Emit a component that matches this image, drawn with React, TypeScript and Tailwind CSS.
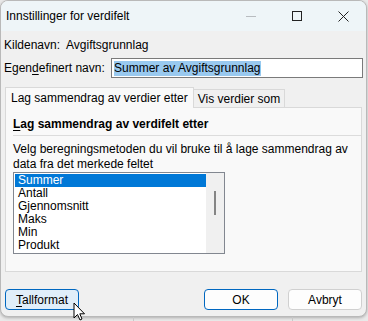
import React from "react";

const items = ["Summer", "Antall", "Gjennomsnitt", "Maks", "Min", "Produkt"];

const font = { fontFamily: '"Liberation Sans", Arial, sans-serif' };

function U({ children }: { children: React.ReactNode }) {
  return <span className="underline underline-offset-2">{children}</span>;
}

const App = () => {
  return (
    <div className="relative w-[368px] h-[321px] overflow-hidden bg-[#e9e9e9] text-[12px] leading-[16px] text-black" style={font}>
      {/* strip under window */}
      <div className="absolute left-[133px] top-[317px] h-[4px] w-px bg-[#c8c8c8]" />
      <div className="absolute left-[292px] top-[317px] h-[4px] w-px bg-[#c8c8c8]" />

      <div className="flex flex-col w-[367px] h-[317px] rounded-lg border border-[#b9b9b9] bg-[#f0f0f0] overflow-hidden shadow-[0_1px_3px_rgba(0,0,0,0.25)]">
        {/* title bar */}
        <div className="shrink-0 flex items-center h-[30px] bg-[#eef5f8] pl-[5px]">
          <span className="flex-1 whitespace-nowrap">Innstillinger for verdifelt</span>
          <div className="w-[46px] h-full flex items-center justify-center">
            <div className="w-[10px] h-px bg-[#b8bcc0]" />
          </div>
          <div className="w-[46px] h-full flex items-center justify-center">
            <div className="w-[10px] h-[10px] border border-[#222]" />
          </div>
          <div className="w-[46px] h-full flex items-center justify-center">
            <svg width="11" height="11" viewBox="0 0 11 11">
              <path d="M0.5 0.5 L10.5 10.5 M10.5 0.5 L0.5 10.5" stroke="#222" strokeWidth="1" />
            </svg>
          </div>
        </div>

        {/* body */}
        <div className="flex flex-col px-[3px] pt-[6px] flex-1">
          <div className="flex items-center h-[16px] whitespace-nowrap">
            <span className="w-[62px]">Kildenavn:</span>
            <span>Avgiftsgrunnlag</span>
          </div>

          <div className="flex items-center mt-[5px]">
            <span className="w-[107px] whitespace-nowrap">
              Egen<U>d</U>efinert navn:
            </span>
            <div className="flex items-center w-[252px] h-[20px] border border-[#7a7a7a] bg-white px-[2px]">
              <span className="bg-[#99c9ef] leading-[15px] whitespace-nowrap">Summer av Avgiftsgrunnlag</span>
            </div>
          </div>

          {/* tabs */}
          <div className="flex mt-[9px] ml-[1px] items-end whitespace-nowrap">
            <div className="relative z-10 h-[21px] px-[5px] flex items-center bg-[#f9f9f9] border border-[#d9d9d9] border-b-0">
              Lag sammendrag av verdier etter
            </div>
            <div className="h-[19px] px-[4px] flex items-center bg-[#f0f0f0] border border-[#d9d9d9] border-l-0 border-b-0">
              Vis verdier som
            </div>
          </div>
          <div className="-mt-px ml-[1px] w-[357px] h-[165px] border border-[#d9d9d9] bg-[#f9f9f9] pl-[7px] pt-[8px]">
            <div className="font-bold whitespace-nowrap">
              <U>L</U>ag sammendrag av verdifelt etter
            </div>
            <div className="h-px bg-[#dcdcdc] mt-[3px]" />
            <div className="mt-[6px] leading-[15px] pr-[10px]">
              Velg beregningsmetoden du vil bruke til å lage sammendrag av data fra det merkede feltet
            </div>
            <div className="flex w-[212px] h-[82px] border border-[#828790] bg-white">
              <div className="flex-1 pl-px pt-px">
                {items.map((it, i) => (
                  <div
                    key={it}
                    className={
                      "h-[13px] leading-[13px] pl-[3px] " + (i === 0 ? "bg-[#0078d7] text-white" : "")
                    }
                  >
                    {it}
                  </div>
                ))}
              </div>
              <div className="w-[18px] bg-[#f0f0f0] flex justify-center pt-[18px]">
                <div className="w-[2px] h-[24px] bg-[#858585]" />
              </div>
            </div>
          </div>

          {/* buttons */}
          <div className="flex items-center mt-[17px] ml-px">
            <button className="w-[74px] h-[21px] rounded-[4px] border border-[#0067c0] bg-[#e0eef9] leading-[16px]">
              <U>T</U>allformat
            </button>
            <div className="flex-1" />
            <button className="w-[74px] h-[21px] rounded-[4px] border border-[#0067c0] bg-[#fdfdfd] leading-[16px]">
              OK
            </button>
            <button className="ml-[10px] mr-[1px] w-[74px] h-[21px] rounded-[4px] border border-[#d0d0d0] bg-[#fdfdfd] leading-[16px]">
              Avbryt
            </button>
          </div>
        </div>
      </div>

      {/* mouse cursor */}
      <svg className="absolute left-[73px] top-[302px]" width="14" height="20" viewBox="0 0 14 20">
        <path d="M1 1 L1 16 L4.5 12.5 L7 18 L9 17 L6.8 11.8 L11.5 11.8 Z" fill="white" stroke="black" strokeWidth="1" />
      </svg>
    </div>
  );
};

export default App;
